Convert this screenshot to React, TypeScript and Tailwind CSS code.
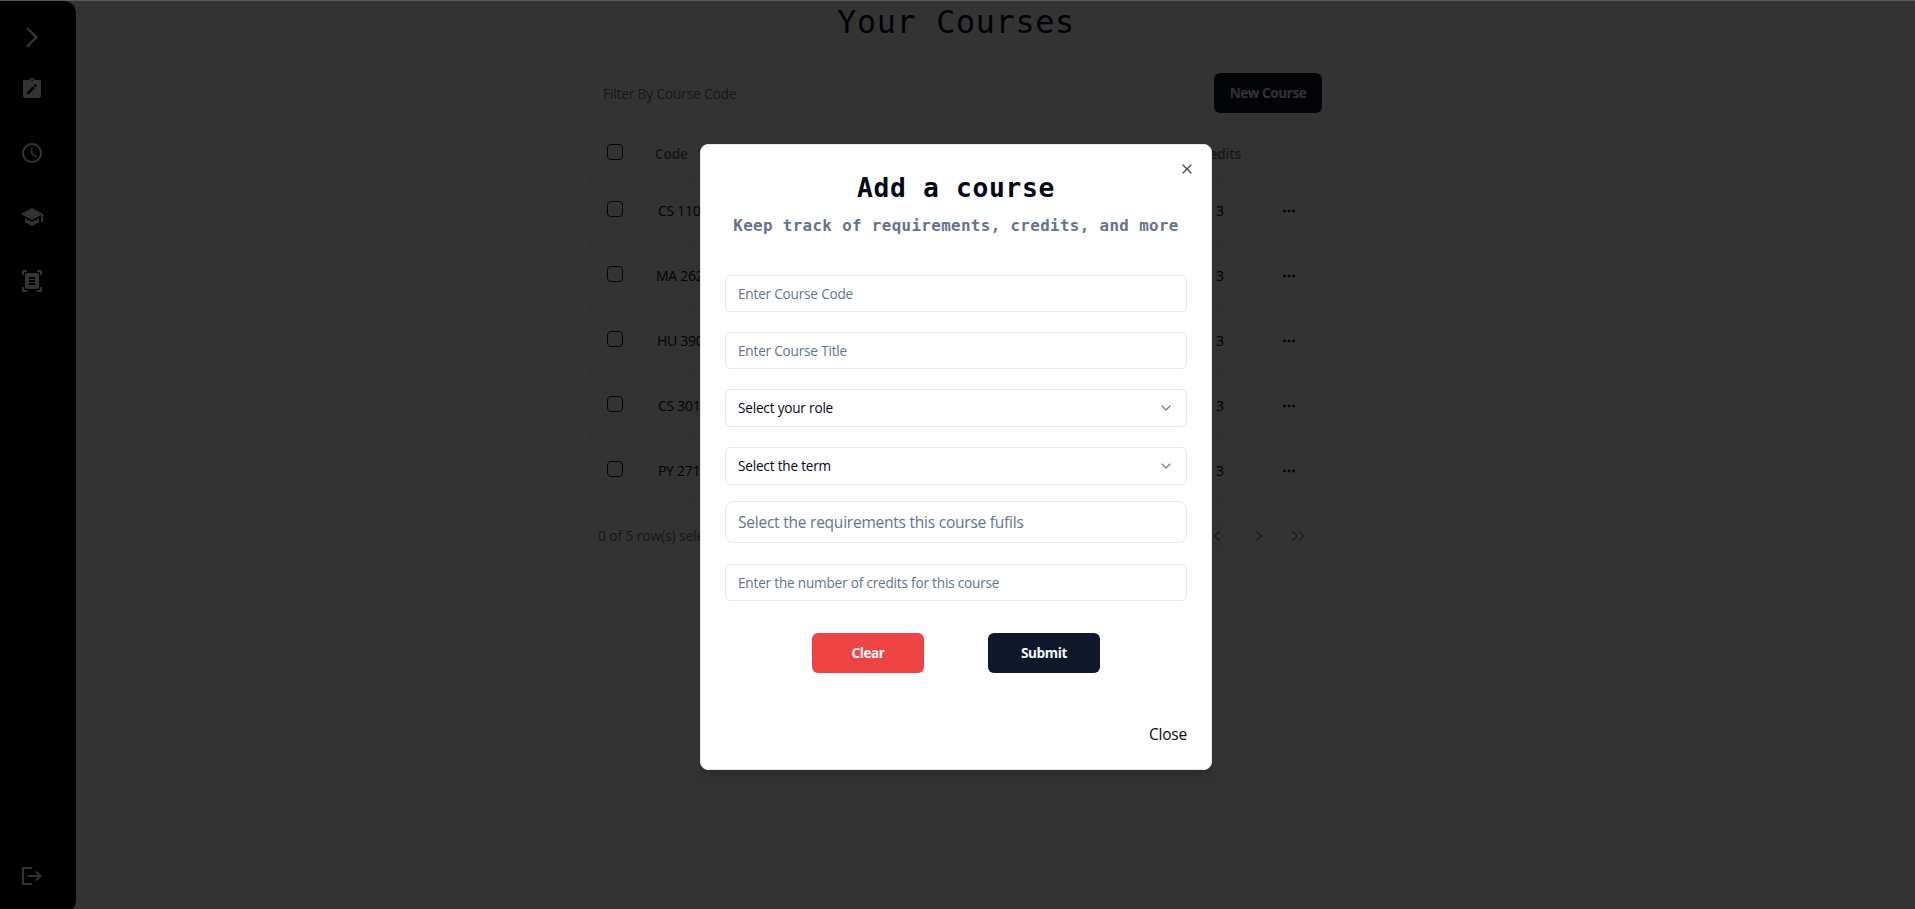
import { ArrowUpDown, ChevronDown, X } from "lucide-react";
import { MdSchool, MdDocumentScanner, MdAccessTime } from "react-icons/md";

const courses = [
  { code: "CS 110", pad: "pl-[67px]" },
  { code: "MA 262", pad: "pl-[65px]" },
  { code: "HU 390", pad: "pl-[66px]" },
  { code: "CS 301", pad: "pl-[67px]" },
  { code: "PY 271", pad: "pl-[67px]" },
];

function Sidebar() {
  return (
    <aside className="flex h-[911px] w-[76px] shrink-0 flex-col rounded-r-xl bg-black pl-5 text-white">
      <svg className="mt-6 size-6" viewBox="0 0 24 24" fill="none" stroke="currentColor" strokeWidth="2.4">
        <path d="M7 3l9.500 9.300L7 21.600" />
      </svg>
      <svg className="mt-7 size-6" viewBox="0 0 24 24" fill="currentColor">
        <path d="M19 3h-4.200a3 3 0 0 0-5.600 0H5a2 2 0 0 0-2 2v14a2 2 0 0 0 2 2h14a2 2 0 0 0 2-2V5a2 2 0 0 0-2-2zm-7-.2a.8.8 0 1 1 0 1.600.8.8 0 0 1 0-1.600zM9.100 17H7v-2.100l6-6 2.100 2.100zm7.700-7.700l-1 1-2.100-2.100 1-1a.6.6 0 0 1 .8 0l1.300 1.300c.2.2.2.600 0 .8z" />
      </svg>
      <MdAccessTime className="mt-10 size-6" />
      <MdSchool className="mt-10 size-6" />
      <MdDocumentScanner className="mt-10 size-6" />
      <svg className="mt-auto mb-6 size-6" viewBox="0 0 24 24" fill="none" stroke="currentColor" strokeWidth="2" strokeLinejoin="round">
        <path d="M12 4H3v16h9M8 12h13M16 7.500l4.500 4.500-4.500 4.500" />
      </svg>
    </aside>
  );
}

function Box() {
  return <span className="size-4 shrink-0 rounded-[4px] border border-slate-900" />;
}

function PageButton({ path }: { path: string }) {
  return (
    <button className="flex size-8 items-center justify-center rounded-md border border-slate-200 opacity-50">
      <svg className="size-4" viewBox="0 0 16 16" fill="none" stroke="currentColor" strokeWidth="1.3">
        <path d={path} />
      </svg>
    </button>
  );
}

function Dots() {
  return (
    <svg className="mr-2 size-4" viewBox="0 0 16 16" fill="currentColor">
      <circle cx="3.500" cy="8" r="1.450" />
      <circle cx="8" cy="8" r="1.450" />
      <circle cx="12.500" cy="8" r="1.450" />
    </svg>
  );
}

function Courses() {
  return (
    <main className="flex flex-1 flex-col items-center pr-[79px]">
      <h1 className="pt-px font-['DejaVu_Sans_Mono',monospace] text-[31.7px] leading-10 tracking-[0.72px]">Your Courses</h1>
      <div className="mt-[31px] w-[732px]">
        <div className="flex h-10 items-center justify-between">
          <div className="flex h-10 w-96 items-center rounded-md border border-slate-200 px-3 pt-0.5 text-[13.8px] tracking-[-0.2px] text-slate-500">Filter By Course Code</div>
          <button className="h-10 w-[108px] rounded-md bg-slate-900 text-[13.6px] font-bold tracking-[-0.45px] text-slate-50">New Course</button>
        </div>
        <div className="mt-4 rounded-md border border-slate-200">
          <div className="relative flex h-12 items-center pr-4 pl-16 text-[13.6px] font-semibold tracking-[-0.1px] text-slate-500">
            <div className="absolute top-[14px] left-4 flex"><Box /></div>
            <span className="w-[41px]">Code</span>
            <ArrowUpDown className="size-4" strokeWidth={1.5} />
            <span className="mr-[64px] ml-auto">Credits</span>
          </div>
          {courses.map((c) => (
            <div key={c.code} className="relative flex h-[65px] items-center border-t border-slate-200 pr-4 text-[14px]">
              <div className="absolute top-[22px] left-4 flex"><Box /></div>
              <span className={`${c.pad} pb-0.5 tracking-[-0.3px]`}>{c.code}</span>
              <span className="mr-[57px] ml-auto pb-0.5">3</span>
              <Dots />
            </div>
          ))}
        </div>
        <div className="flex items-center py-4 pr-2 pl-2">
          <span className="mr-auto text-[13.8px] tracking-[-0.1px] text-slate-500">0 of 5 row(s) selected.</span>
          <div className="flex gap-2 text-slate-900">
            <PageButton path="M7.500 3.200L2.700 8l4.800 4.800M13.500 3.200L8.700 8l4.800 4.800" />
            <PageButton path="M9.500 3.200L4.700 8l4.800 4.800" />
            <PageButton path="M6.500 3.200L11.300 8l-4.800 4.800" />
            <PageButton path="M2.500 3.200L7.300 8l-4.800 4.800M8.700 3.200L13.500 8l-4.800 4.800" />
          </div>
        </div>
      </div>
    </main>
  );
}

function TextField({ label }: { label: string }) {
  return <div className="flex h-[37px] items-center rounded-md border border-slate-200 px-3 pt-px text-[13.6px] tracking-[-0.2px] text-slate-500">{label}</div>;
}

function SelectField({ label }: { label: string }) {
  return (
    <div className="flex h-[38px] items-center justify-between rounded-md border border-slate-200 px-3 text-[13.6px] tracking-[-0.2px]">
      <span className="pt-px">{label}</span>
      <ChevronDown className="size-4 opacity-50" />
    </div>
  );
}

function AddCourseDialog() {
  return (
    <section className="relative flex h-[626px] w-[512px] flex-col rounded-lg border border-slate-200 bg-white px-6 shadow-lg">
      <X className="absolute top-4 right-4 size-4 opacity-70" />
      <h2 className="mt-[25px] text-center font-['DejaVu_Sans_Mono',monospace] text-[26.3px] leading-9 font-bold tracking-[0.67px]">Add a course</h2>
      <p className="mt-2 text-center font-['DejaVu_Sans_Mono',monospace] text-[15.8px] leading-6 font-bold tracking-[0.39px] whitespace-nowrap text-slate-500">Keep track of requirements, credits, and more</p>
      <div className="mt-[37px] flex flex-col">
        <TextField label="Enter Course Code" />
        <div className="h-5" />
        <TextField label="Enter Course Title" />
        <div className="h-5" />
        <SelectField label="Select your role" />
        <div className="h-5" />
        <SelectField label="Select the term" />
        <div className="mt-4 flex h-[42px] items-center rounded-lg border border-slate-200 px-3 pt-0.5 text-[15.5px] tracking-[-0.23px] text-slate-500">Select the requirements this course fufils</div>
        <div className="h-[21px]" />
        <TextField label="Enter the number of credits for this course" />
      </div>
      <div className="mt-8 flex justify-center gap-16 text-[13.6px] font-bold tracking-[-0.4px] text-slate-50">
        <button className="h-10 w-28 rounded-md bg-[#ef4444]">Clear</button>
        <button className="h-10 w-28 rounded-md bg-slate-900">Submit</button>
      </div>
      <button className="mt-[50px] self-end text-[15.5px] tracking-[-0.2px]">Close</button>
    </section>
  );
}

export default function App() {
  return (
    <div className="relative h-[909px] w-full overflow-hidden bg-white pt-px font-['Open_Sans',sans-serif] text-[#020817]">
      <div className="flex">
        <Sidebar />
        <Courses />
      </div>
      <div className="absolute inset-0 flex items-start justify-center border-t border-[#5a5a5a] bg-black/80 pt-[143px] pr-[3px]">
        <AddCourseDialog />
      </div>
    </div>
  );
}
